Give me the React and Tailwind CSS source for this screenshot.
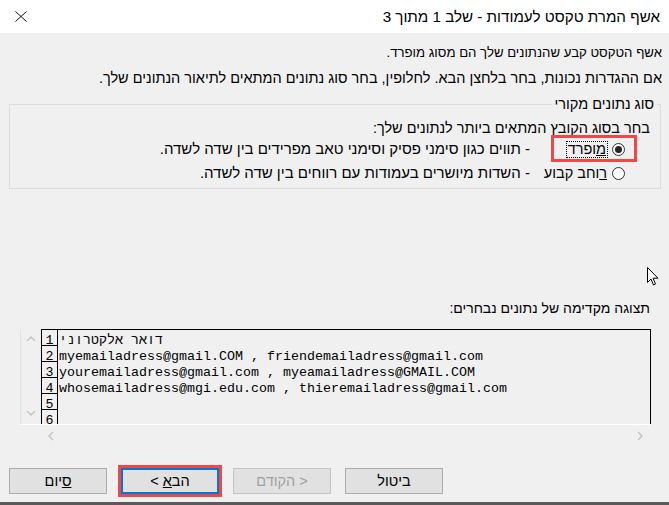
import React from 'react';

const rows = [
  'דואר אלקטרוני',
  'myemailadress@gmail.COM , friendemailadress@gmail.com',
  'youremailadress@gmail.com , myeamailadress@GMAIL.COM',
  'whosemailadress@mgi.edu.com , thieremailadress@gmail.com',
  '',
  '',
];

function Chevron({ dir }) {
  const paths = {
    up: 'M1 6 L5 2 L9 6',
    down: 'M1 2 L5 6 L9 2',
    left: 'M6 1 L2 5 L6 9',
    right: 'M2 1 L6 5 L2 9',
  };
  const vertical = dir === 'up' || dir === 'down';
  return (
    <svg width={vertical ? 10 : 8} height={vertical ? 8 : 10} viewBox={vertical ? '0 0 10 8' : '0 0 8 10'}>
      <path d={paths[dir]} fill="none" stroke="#c4c4c4" strokeWidth="1.5" />
    </svg>
  );
}

function Radio({ checked }) {
  return (
    <span className="w-[13px] h-[13px] rounded-full border border-[#333] bg-white flex items-center justify-center shrink-0">
      {checked && <span className="w-[7px] h-[7px] rounded-full bg-[#262626]" />}
    </span>
  );
}

export default function App() {
  return (
    <div
      dir="rtl"
      className="w-[669px] h-[505px] bg-[#f0f0f0] flex flex-col relative overflow-hidden text-black text-[14.5px] leading-[16px] font-['Liberation_Sans',Arial,sans-serif]"
    >
      {/* title bar */}
      <div className="h-[33px] bg-white flex items-center justify-between pr-[9px] pl-[15px] shrink-0">
        <span className="text-[15.2px] pt-[1px]">אשף המרת טקסט לעמודות - שלב 1 מתוך 3</span>
        <svg width="12" height="11" viewBox="0 0 12 11">
          <path d="M0.5 0.5 L11.5 10.5 M11.5 0.5 L0.5 10.5" stroke="#111" strokeWidth="1" fill="none" />
        </svg>
      </div>

      <p className="mt-[12px] pr-[7px] text-[13.2px]">אשף הטקסט קבע שהנתונים שלך הם מסוג מופרד.</p>
      <p className="mt-[9px] pr-[7px]">אם ההגדרות נכונות, בחר בלחצן הבא. לחלופין, בחר סוג נתונים המתאים לתיאור הנתונים שלך.</p>

      {/* original data type group */}
      <div className="relative mt-[18px] mr-[8px] ml-[9px] h-[85px] border border-[#dcdcdc] pt-[15px] pr-[10px]">
        <span className="absolute -top-[9px] right-[3px] px-[3px] bg-[#f0f0f0]">סוג נתונים מקורי</span>
        <p>בחר בסוג הקובץ המתאים ביותר לנתונים שלך:</p>
        <div className="mr-[25px] mt-[1px]">
          <div className="h-[24px] flex items-center">
            <div className="w-[95px] flex items-center gap-[4px]">
              <Radio checked />
              <span className="border border-dotted border-black px-[1px] leading-[15px]">
                <u>מ</u>ופרד
              </span>
            </div>
            <span className="text-[15px]">- תווים כגון סימני פסיק וסימני טאב מפרידים בין שדה לשדה.</span>
          </div>
          <div className="h-[24px] flex items-center">
            <div className="w-[95px] flex items-center gap-[5px]">
              <Radio />
              <span>
                <u>ר</u>וחב קבוע
              </span>
            </div>
            <span className="text-[15px]">- השדות מיושרים בעמודות עם רווחים בין שדה לשדה.</span>
          </div>
        </div>
      </div>

      <p className="mt-[111px] pr-[19px] text-[14px]">תצוגה מקדימה של נתונים נבחרים:</p>

      {/* preview */}
      <div dir="ltr" className="mt-[13px] mr-[18px] w-[631px] flex flex-col">
        <div className="flex h-[96px] border-b border-white">
          <div className="w-[21px] border-l border-[#e2e2e2] flex flex-col items-center justify-between pt-[6px] pb-[7px]">
            <Chevron dir="up" />
            <Chevron dir="down" />
          </div>
          <div className="flex-1 border-l border-t border-r border-black overflow-hidden font-['Liberation_Mono','Courier_New',monospace] text-[13.33px]">
            {rows.map((r, i) => (
              <div key={i} className="flex h-[16px] leading-[21px]">
                <span className="w-[16px] h-[16px] border-r border-b border-black text-center shrink-0">{i + 1}</span>
                <span className="pl-[1px] whitespace-pre">{r}</span>
              </div>
            ))}
          </div>
        </div>
        <div className="h-[21px] flex items-center justify-between pl-[27px] pr-[7px]">
          <Chevron dir="left" />
          <Chevron dir="right" />
        </div>
      </div>

      {/* buttons */}
      <div dir="ltr" className="mt-[22px] ml-[9px] flex gap-[14px] text-[14.5px]">
        <button className="w-[98px] h-[26px] bg-[#e1e1e1] border border-[#adadad]" dir="rtl">
          <u>ס</u>יום
        </button>
        <button className="w-[98px] h-[26px] bg-[#e1e1e1] border-2 border-[#0078d7] outline-[3px] outline-solid outline-[#ef4848]">
          {'< '}הב<u>א</u>
        </button>
        <button className="w-[98px] h-[26px] bg-[#e1e1e1] border border-[#c4c4c4] text-[#a0a0a0]">
          הקודם{' >'}
        </button>
        <button className="w-[98px] h-[26px] bg-[#e1e1e1] border border-[#adadad]">ביטול</button>
      </div>

      <div className="mt-auto h-[3px] bg-[#5a5a5a]" />

      {/* highlight around the selected option */}
      <div className="absolute left-[551px] top-[135px] w-[86px] h-[27px] border-[3px] border-[#ef4848]" />

      {/* mouse pointer */}
      <svg className="absolute left-[647px] top-[267px]" width="12" height="20" viewBox="0 0 12 20">
        <path d="M0.5 0.5 L0.5 15.5 L4 12 L6.5 18 L8.5 17 L6 11.2 L11 11.2 Z" fill="white" stroke="black" strokeWidth="1" />
      </svg>
    </div>
  );
}
